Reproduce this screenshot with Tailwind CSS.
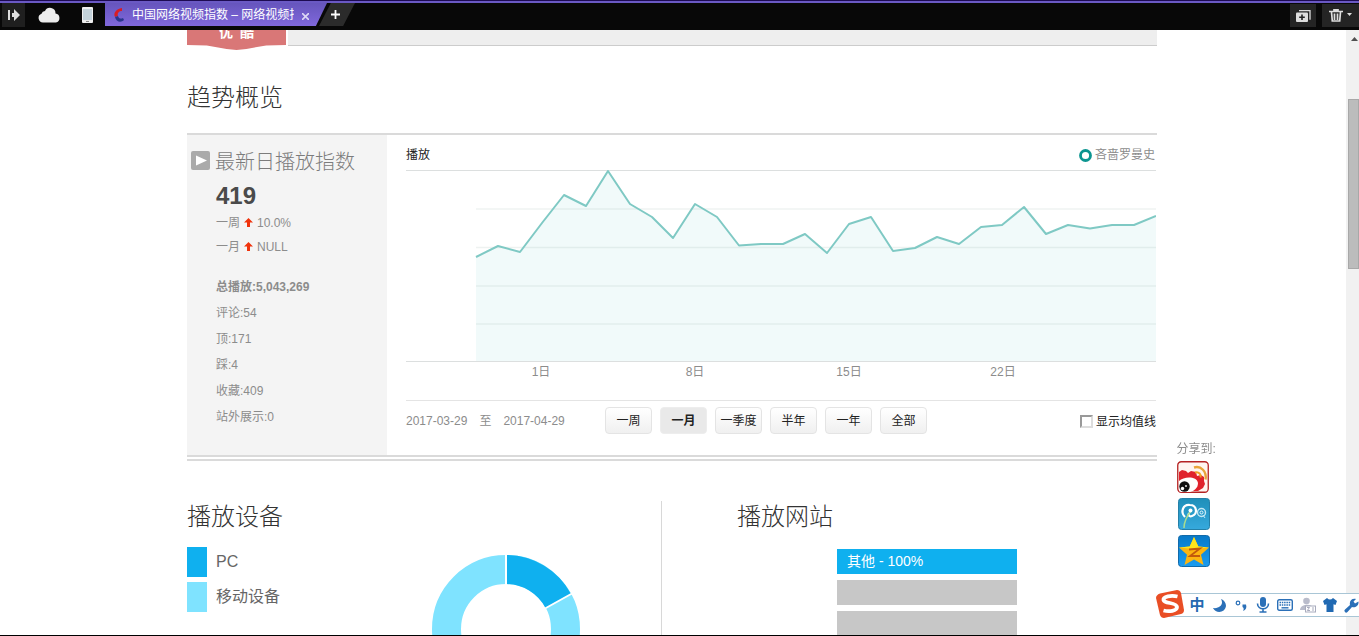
<!DOCTYPE html>
<html lang="zh-CN">
<head>
<meta charset="utf-8">
<meta name="viewport" content="width=device-width, initial-scale=1">
<title>中国网络视频指数</title>
<script src="https://cdn.jsdelivr.net/npm/@tailwindcss/browser@4"></script>
</head>
<body class="flex h-screen flex-col overflow-hidden border-b border-black bg-white font-['Liberation_Sans','Noto_Sans_CJK_SC',sans-serif] text-xs text-[#8c8c8c]">

<!-- Browser tab bar -->
<header class="flex h-[30px] shrink-0 flex-col bg-[#080808]">
  <div class="h-px bg-[#1d0b52]"></div>
  <div class="h-[2px] bg-[#6a59c4]"></div>
  <div class="flex flex-1 items-start">
    <button aria-label="侧栏" class="ml-[2px] flex h-6 w-[23px] items-center justify-center bg-[#1f1f1f]">
      <svg class="h-3 w-3" viewBox="0 0 12 12" fill="#ddd"><path d="M0 1h2v10H0zM4 4h2V0l6 6-6 6V8H4z"/></svg>
    </button>
    <button aria-label="云同步" class="ml-[13px] flex h-6 w-[22px] items-center justify-center">
      <svg class="h-4 w-[22px]" viewBox="0 0 22 16" fill="#ececec"><path d="M5 15.500a4.500 4.500 0 0 1-1.500-8.700A4 4 0 0 1 7 4a5.500 5.500 0 0 1 10.500 2.500 4.600 4.600 0 0 1 .5 9z"/></svg>
    </button>
    <button aria-label="手机" class="ml-[21px] flex h-6 w-3 items-center justify-center">
      <svg class="h-4 w-[11px]" viewBox="0 0 11 16"><rect width="11" height="16" rx="1" fill="#eee"/><rect x="1" y="2" width="9" height="11" fill="#c3d2da"/><path d="M4 14.500h3" stroke="#888"/></svg>
    </button>
    <div class="ml-3 flex h-[23px] w-[222px] items-center bg-linear-to-b from-[#6655bd] to-[#8068dc] pl-2 [clip-path:polygon(0_0,100%_0,95%_100%,0_100%)]">
      <svg class="h-4 w-3 shrink-0" viewBox="0 0 12 16"><path d="M9 1C3 2 0 6 2 10l3-1C4 6 6 4 9 4z" fill="#d81d25"/><path d="M2 10c1 5 6 6 9 3l-1-2c-2 1-4 1-5-2z" fill="#28368e"/></svg>
      <span class="ml-[7px] w-[162px] overflow-hidden whitespace-nowrap text-xs text-white">中国网络视频指数 – 网络视频指</span>
      <button aria-label="关闭标签页" class="ml-[5px] flex size-3 items-center justify-center pt-[3px]">
        <svg class="size-[7px]" viewBox="0 0 7 7" stroke="#ddd8f5" stroke-width="1.600"><path d="M0 0l7 7M7 0L0 7"/></svg>
      </button>
    </div>
    <button aria-label="新标签页" class="-ml-2 flex h-[23px] w-9 items-center justify-center bg-[#2b2b2b] [clip-path:polygon(33%_0,100%_0,67%_100%,0_100%)]">
      <svg class="mr-1 size-[9px]" viewBox="0 0 9 9" stroke="#fff" stroke-width="1.800"><path d="M4.500 0v9M0 4.500h9"/></svg>
    </button>
    <button aria-label="恢复窗口" class="ml-auto mt-px flex h-[23px] w-[26px] items-center justify-center bg-[#242424]">
      <svg class="h-3 w-[15px]" viewBox="0 0 15 12"><path d="M3 .7h11v9" fill="none" stroke="#ddd" stroke-width="1.300"/><rect y="2.500" width="12" height="9.500" rx="1" fill="#ddd"/><path d="M6 4.500v5.500M3.200 7.300h5.600" stroke="#222" stroke-width="1.600"/></svg>
    </button>
    <button aria-label="清除" class="ml-[6px] mt-px flex h-[23px] w-[37px] items-center justify-center gap-1 bg-[#242424]">
      <svg class="h-[13px] w-[14px]" viewBox="0 0 14 13" fill="none" stroke="#ddd" stroke-width="1.700"><path d="M0 2.500h14M5 2V.8h4V2M2.500 3l.8 9h7.400l.8-9M5.500 4.500V11M8.500 4.500V11"/></svg>
      <svg class="mb-[3px] h-[3px] w-[5px]" viewBox="0 0 5 3" fill="#ddd"><path d="M0 0h5L2.500 3z"/></svg>
    </button>
  </div>
</header>

<div class="flex min-h-0 flex-1">
  <main class="min-w-0 flex-1 overflow-hidden pr-[2px]">
    <div class="mx-auto max-w-[970px]">

      <div class="flex h-5 items-start gap-[2px]">
        <a href="#" class="flex h-5 w-[99px] items-start justify-center overflow-hidden bg-[#d97777] font-bold text-white [clip-path:polygon(0_0,100%_0,100%_75%,80%_77%,60%_95%,50%_100%,40%_95%,20%_77%,0_75%)]">
          <span class="-mt-[6px] text-sm leading-4">优&ensp;酷</span>
        </a>
        <div class="h-4 flex-1 border-b border-[#ccc] bg-[#eee]"></div>
      </div>

      <h2 class="mt-8 text-2xl leading-8 font-light text-[#333]">趋势概览</h2>

      <section class="mt-[19px] border-b-2 border-[#dadada] pb-[2px]">
        <div class="flex border-y-2 border-[#dadada]">
          <aside class="h-80 w-[200px] shrink-0 bg-[#f4f4f4] pt-[11px] pl-1">
            <h3 class="flex items-center gap-1 text-xl leading-8 font-light text-[#7c7c7c]">
              <svg class="mb-[2px] size-5 shrink-0" viewBox="0 0 20 20"><rect width="19" height="19" rx="2" fill="#aaa"/><path d="M5 4.500l11 5-11 5z" fill="#fff"/></svg>
              最新日播放指数
            </h3>
            <div class="pl-[25px]">
              <p class="text-2xl leading-9 font-bold text-[#4a4a4a]">419</p>
              <p class="-mt-[3px] flex items-center gap-1 leading-6 whitespace-nowrap">一周 <svg class="mb-[2px] h-[9px] w-[9px]" viewBox="0 0 9 9"><path d="M4.500 0L9 4.500H6V9H3V4.500H0z" fill="#f0330c"/></svg> 10.0%</p>
              <p class="flex items-center gap-1 leading-6 whitespace-nowrap">一月 <svg class="mb-[2px] h-[9px] w-[9px]" viewBox="0 0 9 9"><path d="M4.500 0L9 4.500H6V9H3V4.500H0z" fill="#f0330c"/></svg> NULL</p>
              <ul class="mt-[15px] leading-[26px]">
                <li class="font-bold">总播放:5,043,269</li>
                <li>评论:54</li>
                <li>顶:171</li>
                <li>踩:4</li>
                <li>收藏:409</li>
                <li>站外展示:0</li>
              </ul>
            </div>
          </aside>

          <div class="min-w-0 flex-1 pl-[19px]">
            <div class="flex h-[35px] items-center justify-between pt-[5px]">
              <span class="text-[#222]">播放</span>
              <span class="flex items-center gap-[3px] pr-[2px]">
                <svg class="size-[13px]" viewBox="0 0 13 13"><circle cx="6.500" cy="6.500" r="5" fill="#fff" stroke="#0c9590" stroke-width="2.800"/></svg>
                吝啬罗曼史
              </span>
            </div>
            <!-- Daily play index -->
            <svg class="block h-48 w-full pr-px" viewBox="0 0 750 192" preserveAspectRatio="none" role="img" aria-label="播放指数趋势">
              <path d="M70 87L92 76 114 82 136 53 158 25 180 36 202 1 224 34 246 47 267 68 289 34 311 47 333 75.500 355 74 377 74 399 64 421 83 443 54 465 47 487 81 509 78 531 67 553 74 575 57 596 55 618 37 640 64 662 55 684 58.500 706 55 728 55 750 46V192H70z" fill="#f1fafa"/>
              <path d="M0 .5H750M0 191.500H750" stroke="#dcdfdf"/>
              <path d="M70 39H750M70 77.500H750M70 116H750M70 154H750" stroke="#7a9a94" stroke-opacity=".13" stroke-width="1.500"/>
              <path d="M70 87L92 76 114 82 136 53 158 25 180 36 202 1 224 34 246 47 267 68 289 34 311 47 333 75.500 355 74 377 74 399 64 421 83 443 54 465 47 487 81 509 78 531 67 553 74 575 57 596 55 618 37 640 64 662 55 684 58.500 706 55 728 55 750 46" fill="none" stroke="#7fc9c4" stroke-width="2" stroke-linejoin="round"/>
            </svg>
            <div class="grid grid-cols-4 pr-[77px] pl-[58px] text-center leading-5">
              <span>1日</span><span>8日</span><span>15日</span><span>22日</span>
            </div>
            <div class="mt-[18px] mr-px flex h-10 items-center border-t border-[#e4e4e4]">
              <div class="flex w-[199px] gap-3 whitespace-nowrap"><time>2017-03-29</time><span>至</span><time>2017-04-29</time></div>
              <div class="flex gap-2 text-[#222]">
                <button class="h-[27px] w-[47px] rounded border border-[#e4e4e4] bg-linear-to-b from-white to-[#f0f0f0]">一周</button>
                <button class="h-[27px] w-[47px] rounded border border-[#ededed] bg-[#e9e9e9] font-bold">一月</button>
                <button class="h-[27px] w-[47px] rounded border border-[#e4e4e4] bg-linear-to-b from-white to-[#f0f0f0] whitespace-nowrap">一季度</button>
                <button class="h-[27px] w-[47px] rounded border border-[#e4e4e4] bg-linear-to-b from-white to-[#f0f0f0]">半年</button>
                <button class="h-[27px] w-[47px] rounded border border-[#e4e4e4] bg-linear-to-b from-white to-[#f0f0f0]">一年</button>
                <button class="h-[27px] w-[47px] rounded border border-[#e4e4e4] bg-linear-to-b from-white to-[#f0f0f0]">全部</button>
              </div>
              <label class="ml-auto flex items-center gap-[3px] pt-[2px] text-[#222]">
                <input type="checkbox" class="size-[13px] appearance-none border-2 border-t-[#999] border-r-[#ddd] border-b-[#ddd] border-l-[#999] bg-white">
                显示均值线
              </label>
            </div>
          </div>
        </div>
      </section>

      <div class="mt-10 flex text-[#333]">
        <section class="h-[140px] w-[475px] border-r border-[#d8d8d8]">
          <h2 class="text-2xl leading-8 font-light">播放设备</h2>
          <div class="flex">
            <ul class="mt-[14px] w-[245px] space-y-[5px] text-base text-[#666]">
              <li class="flex items-center gap-[9px]"><span class="h-[30px] w-5 bg-[#0fb0ef]"></span>PC</li>
              <li class="flex items-center gap-[9px]"><span class="h-[30px] w-5 bg-[#7fe3ff]"></span>移动设备</li>
            </ul>
            <svg class="mt-[22px] size-[148px] shrink-0" viewBox="0 0 148 148" role="img" aria-label="播放设备占比">
              <circle cx="74" cy="74" r="59.500" fill="none" stroke="#7fe3ff" stroke-width="29"/>
              <path d="M74 0A74 74 0 0 1 139 39L113.500 53A45 45 0 0 0 74 29z" fill="#0fb0ef"/>
              <path d="M74 30V0M113 53.500L140 38.500" stroke="#fff" stroke-width="2"/>
            </svg>
          </div>
        </section>
        <section class="flex-1 pl-[75px]">
          <h2 class="text-2xl leading-8 font-light">播放网站</h2>
          <div class="mt-4 ml-[100px] w-[180px] space-y-[6px]">
            <div class="h-[25px] bg-[#0fb0ef] pl-[10px] text-sm leading-[25px] text-white">其他 - 100%</div>
            <div class="h-[25px] bg-[#c7c7c7]"></div>
            <div class="h-[25px] bg-[#c7c7c7]"></div>
          </div>
        </section>
      </div>
    </div>
  </main>

  <!-- Scrollbar -->
  <div class="flex w-[13px] shrink-0 flex-col items-end bg-[#f1f1f1]" aria-hidden="true">
    <svg class="mt-[7px] mr-px h-1 w-[7px]" viewBox="0 0 7 4"><path d="M0 4h7L3.500 0z" fill="#505050"/></svg>
    <div class="mt-[58px] h-[170px] w-[11px] border border-[#a8a8a8] bg-[#bcbcbc]"></div>
  </div>
</div>

<!-- Floating share links -->
<nav class="fixed top-[441px] left-[calc(50%+497px)]">
  <p class="mb-[3px] leading-[17px]">分享到:</p>
  <div class="flex flex-col gap-[5px]">
    <a href="#" aria-label="新浪微博"><svg class="size-8" viewBox="0 0 32 32">
      <rect x=".75" y=".75" width="30.500" height="30.500" rx="3.500" fill="#fff5f0" stroke="#b52323" stroke-width="1.300"/>
      <path d="M2 11l3-2 4 1 2 2 3-2 5 1 1 4 4-1 3 2v4l1 3-2 4-5 3H13L2 20z" fill="#e0222c"/>
      <path d="M2 20c5-5 18-5 19 2 0 5-4 8-8 9H4q-2 0-2-2z" fill="#fff"/>
      <circle cx="7.500" cy="25.500" r="5.200" fill="#111"/><circle cx="5.500" cy="27.500" r="1.700" fill="#fff"/><circle cx="9" cy="25" r=".9" fill="#fff"/>
      <path d="M17 6.500c7-2 13 4 11.500 12" fill="none" stroke="#e9a53a" stroke-width="2.400"/><path d="M18 11.500c4-1 6.500 2 5.500 5" fill="none" stroke="#f0a022" stroke-width="2"/></svg></a>
    <a href="#" aria-label="腾讯微博" class="ml-px"><svg class="size-8" viewBox="0 0 32 32">
      <defs><linearGradient id="tq" x2="0" y2="1"><stop stop-color="#1f8fb9"/><stop offset="1" stop-color="#36a9dd"/></linearGradient><linearGradient id="qz" x2="0" y2="1"><stop stop-color="#0879c8"/><stop offset="1" stop-color="#1a9cf0"/></linearGradient></defs>
      <rect x=".5" y=".5" width="31" height="31" rx="3" fill="url(#tq)" stroke="#2580a8"/>
      <path d="M7 19C2 14 5 6 12 7c7 0 8 9 2 11-3 1-4-1-3-3" fill="none" stroke="#fff" stroke-width="2.200"/>
      <path d="M6 30c0-7 3-12 7-17" fill="none" stroke="#a9dc8e" stroke-width="1.500"/><circle cx="12.500" cy="12.500" r="2" fill="#fff"/>
      <circle cx="23.500" cy="14.500" r="4" fill="none" stroke="#c3e8f5" stroke-width="1.400"/><circle cx="23.500" cy="14.500" r="1.500" fill="none" stroke="#e8f8ff"/><path d="M25 17l2 3" stroke="#c3e8f5"/></svg></a>
    <a href="#" aria-label="QQ空间" class="ml-px"><svg class="size-8" viewBox="0 0 32 32">
      <rect x=".5" y=".5" width="31" height="31" rx="3" fill="url(#qz)" stroke="#126aa9"/>
      <path d="M16 2l4.300 9.500L31 12.500l-8 7.200L25.500 30 16 24.500 6.500 30 9 19.700 1 12.500l10.700-1z" fill="#fcb510"/>
      <path d="M16 2l4.300 9.500L31 12.500 16 14 1 12.500l10.700-1z" fill="#ffe61a"/>
      <path d="M11 14.500l11-1-10 7.500h10" fill="none" stroke="#c25a0c" stroke-width="1.800"/></svg></a>
  </div>
</nav>

<!-- Input method toolbar -->
<div class="fixed top-[593px] right-0 flex h-6 w-[190px] items-center gap-[7px] overflow-visible border-y border-[#a9c6d6] bg-white pl-5">
  <svg class="absolute -top-[5px] -left-[14px] h-[30px] w-[30px]" viewBox="0 0 30 30">
    <path d="M5 4.500L22 1q3 0 4 3l3 17q0 3-3 4L9 29q-3 0-4-3L1 9q0-3 4-4.500z" fill="#e94e25"/>
    <path d="M22.500 7.500C16 6 8 7.500 8.500 11c1 4 13 2 13.500 7 0 4-8 5-13.500 3.500" fill="none" stroke="#fff" stroke-width="3.800"/></svg>
  <button aria-label="中文" class="flex h-5 w-4 shrink-0 items-center justify-center text-[15px] leading-5 font-bold text-[#2569b0]">中</button>
  <button aria-label="半角" class="shrink-0"><svg class="size-[15px]" viewBox="0 0 15 15" fill="#2b70b8"><path d="M9 1c3 5-1 10-8 9 3 6 12 5 13-2 0-3-2-6-5-7z"/></svg></button>
  <button aria-label="标点" class="shrink-0"><svg class="size-[15px]" viewBox="0 0 15 15"><circle cx="4" cy="5" r="1.800" fill="none" stroke="#2b70b8" stroke-width="1.200"/><path d="M8.500 6.500h3.500c1 3 0 5.500-3 6.500 1-2 1-3-.5-4z" fill="#2b70b8"/></svg></button>
  <button aria-label="语音" class="shrink-0"><svg class="h-4 w-[14px]" viewBox="0 0 14 16"><rect x="4" width="6" height="10" rx="3" fill="#2b70b8"/><path d="M1.500 6.500c0 7 11 7 11 0M7 12v3M3.500 15h7" fill="none" stroke="#2b70b8" stroke-width="1.600"/></svg></button>
  <button aria-label="软键盘" class="shrink-0"><svg class="h-3 w-4" viewBox="0 0 16 12"><rect x=".7" y=".7" width="14.600" height="10.600" rx="1.500" fill="#fff" stroke="#2b70b8" stroke-width="1.400"/><path d="M2.500 3.500h11M2.500 6h11" stroke="#2b70b8" stroke-width="1.600" stroke-dasharray="1.500 .8"/><path d="M4.500 8.800h7" stroke="#2b70b8" stroke-width="1.400"/></svg></button>
  <button aria-label="账户" class="shrink-0"><svg class="size-4" viewBox="0 0 16 16"><circle cx="6.500" cy="4" r="3.300" fill="#b9bccb"/><path d="M0 13c0-6 12-7 13-2v2z" fill="#b9bccb"/><rect x="5.500" y="9" width="10" height="6" fill="#fff" stroke="#a8abbd"/><path d="M7 10.500h2.500L7.300 13.500H10M13 10v4" fill="none" stroke="#a8abbd"/></svg></button>
  <button aria-label="皮肤" class="shrink-0"><svg class="size-[14px]" viewBox="0 0 14 14"><path d="M4 0q3 3 6 0l4 3-1.500 4-2-.8V14h-7V6.200l-2 .8L0 3z" fill="#2069b2"/></svg></button>
  <button aria-label="工具箱" class="shrink-0"><svg class="size-[15px]" viewBox="0 0 15 15"><path d="M1.500 14.500Q-.5 13 1 11.500L6 7C5 3 8 0 12 1L9.500 3.500 11 5.500l3.500-2C15 8 11 10 8 9l-4.500 5q-1 1-2 .5z" fill="#2b70b8"/></svg></button>
</div>
</body>
</html>
